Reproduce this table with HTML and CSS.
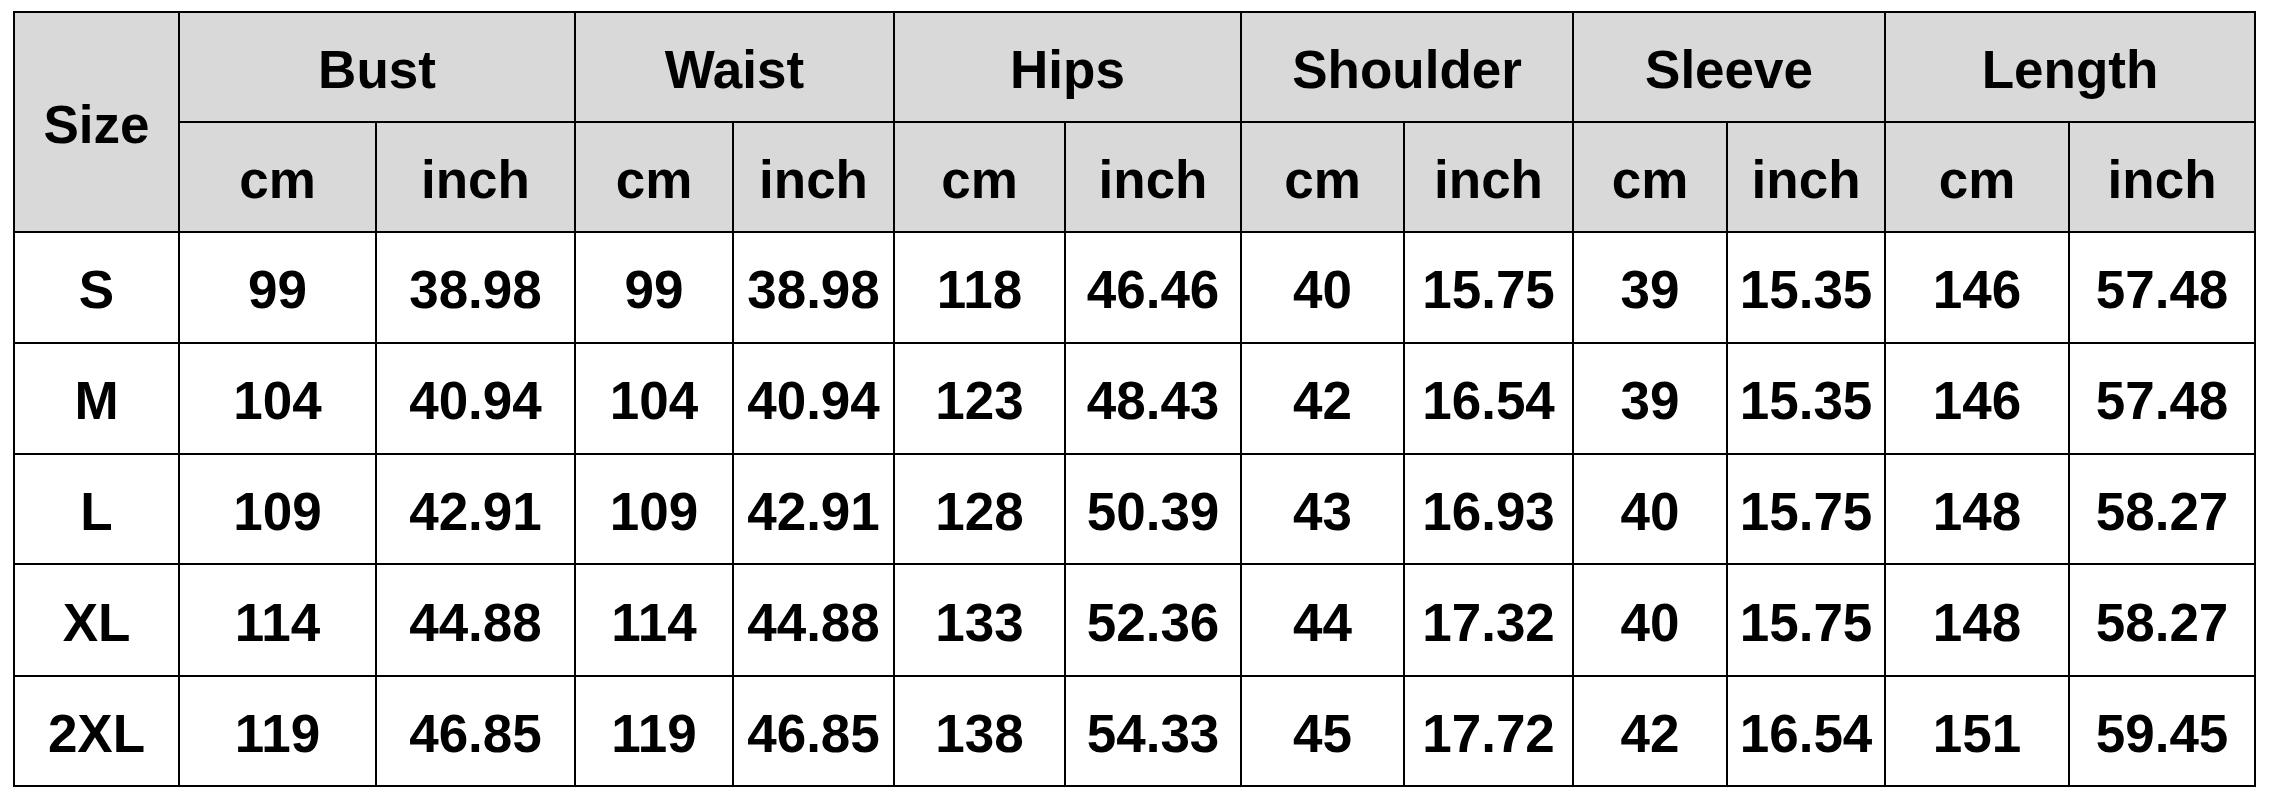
FILE: index.html
```html
<!DOCTYPE html>
<html lang="en">
<head>
<meta charset="utf-8">
<title>Size Chart</title>
<link rel="stylesheet" href="styles.css">
</head>
<body>
<table class="size-table">
  <colgroup>
    <col class="c-size">
    <col class="c-bust-cm"><col class="c-bust-in">
    <col class="c-waist-cm"><col class="c-waist-in">
    <col class="c-hips-cm"><col class="c-hips-in">
    <col class="c-sh-cm"><col class="c-sh-in">
    <col class="c-sl-cm"><col class="c-sl-in">
    <col class="c-len-cm"><col class="c-len-in">
  </colgroup>
  <thead>
    <tr class="r-h1">
      <th rowspan="2">Size</th>
      <th colspan="2">Bust</th>
      <th colspan="2">Waist</th>
      <th colspan="2">Hips</th>
      <th colspan="2">Shoulder</th>
      <th colspan="2">Sleeve</th>
      <th colspan="2">Length</th>
    </tr>
    <tr class="r-h2">
      <th>cm</th><th>inch</th>
      <th>cm</th><th>inch</th>
      <th>cm</th><th>inch</th>
      <th>cm</th><th>inch</th>
      <th>cm</th><th>inch</th>
      <th>cm</th><th>inch</th>
    </tr>
  </thead>
  <tbody>
    <tr class="r-s">
      <td>S</td><td>99</td><td>38.98</td><td>99</td><td>38.98</td><td>118</td><td>46.46</td><td>40</td><td>15.75</td><td>39</td><td>15.35</td><td>146</td><td>57.48</td>
    </tr>
    <tr class="r-m">
      <td>M</td><td>104</td><td>40.94</td><td>104</td><td>40.94</td><td>123</td><td>48.43</td><td>42</td><td>16.54</td><td>39</td><td>15.35</td><td>146</td><td>57.48</td>
    </tr>
    <tr class="r-l">
      <td>L</td><td>109</td><td>42.91</td><td>109</td><td>42.91</td><td>128</td><td>50.39</td><td>43</td><td>16.93</td><td>40</td><td>15.75</td><td>148</td><td>58.27</td>
    </tr>
    <tr class="r-xl">
      <td>XL</td><td>114</td><td>44.88</td><td>114</td><td>44.88</td><td>133</td><td>52.36</td><td>44</td><td>17.32</td><td>40</td><td>15.75</td><td>148</td><td>58.27</td>
    </tr>
    <tr class="r-2xl">
      <td>2XL</td><td>119</td><td>46.85</td><td>119</td><td>46.85</td><td>138</td><td>54.33</td><td>45</td><td>17.72</td><td>42</td><td>16.54</td><td>151</td><td>59.45</td>
    </tr>
  </tbody>
</table>
</body>
</html>
```

FILE: styles.css
```css
html, body {
  margin: 0;
  padding: 0;
  background: #ffffff;
}

body {
  padding: 11px 0 0 13px;
  font-family: "Liberation Sans", Arial, sans-serif;
}

.size-table {
  border-collapse: collapse;
  table-layout: fixed;
  width: 2241px;
  color: #000;
  font-weight: bold;
  font-size: 53px;
}

.size-table th,
.size-table td {
  border: 2px solid #000;
  padding: 4px 0 0 0;
  text-align: center;
  vertical-align: middle;
  font-weight: bold;
  line-height: 1;
}

.size-table th {
  background: #d9d9d9;
}

.size-table td {
  background: #ffffff;
}

.c-size { width: 165px; }
.c-bust-cm { width: 197px; }
.c-bust-in { width: 199px; }
.c-waist-cm { width: 158px; }
.c-waist-in { width: 161px; }
.c-hips-cm { width: 171px; }
.c-hips-in { width: 176px; }
.c-sh-cm { width: 163px; }
.c-sh-in { width: 169px; }
.c-sl-cm { width: 154px; }
.c-sl-in { width: 158px; }
.c-len-cm { width: 184px; }
.c-len-in { width: 186px; }

.r-h1 { height: 110px; }
.r-h2 { height: 110px; }
.r-s { height: 111px; }
.r-m { height: 111px; }
.r-l { height: 110px; }
.r-xl { height: 112px; }
.r-2xl { height: 110px; }
```
